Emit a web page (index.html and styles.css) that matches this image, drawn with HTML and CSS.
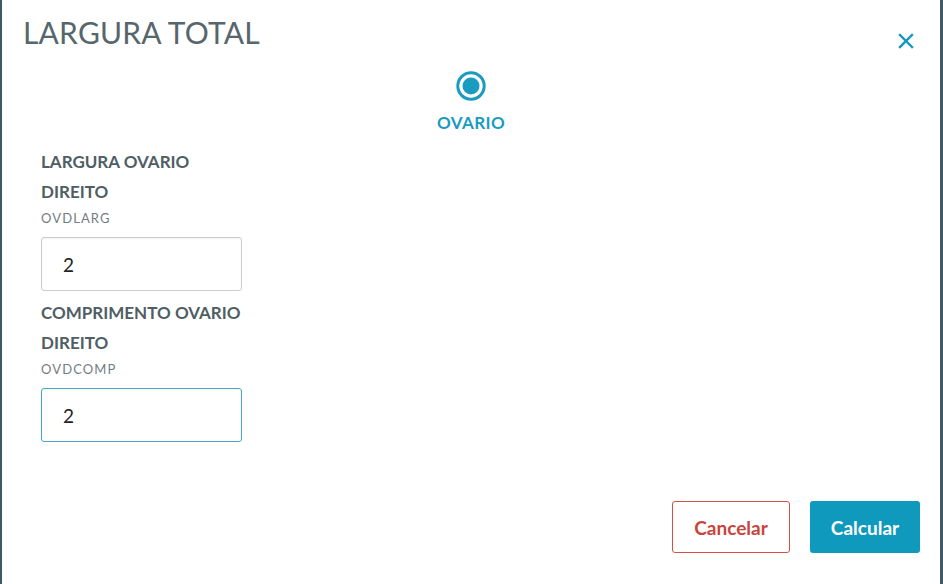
FILE: index.html
```html
<!DOCTYPE html>
<html>
<head>
<meta charset="utf-8">
<link rel="stylesheet" href="styles.css">
</head>
<body>
<div class="frame">
  <div class="modal">
    <div class="header">
      <h1 class="title">LARGURA TOTAL</h1>
      <button class="close" aria-label="Fechar">
        <svg width="16" height="16" viewBox="0 0 16 16"><path d="M2 2 L14 14 M14 2 L2 14" stroke="#1298bd" stroke-width="2.4" stroke-linecap="square" fill="none"/></svg>
      </button>
    </div>
    <div class="step">
      <svg class="radio" width="32" height="32" viewBox="0 0 32 32"><circle cx="16" cy="16" r="13.2" fill="none" stroke="#1a9bc0" stroke-width="3"/><circle cx="16" cy="16" r="8.5" fill="#1a9bc0"/></svg>
      <div class="step-label">OVARIO</div>
    </div>
    <div class="form">
      <div class="field">
        <div class="label">LARGURA OVARIO<br>DIREITO</div>
        <div class="code">OVDLARG</div>
        <div class="input">2</div>
      </div>
      <div class="field">
        <div class="label">COMPRIMENTO OVARIO<br>DIREITO</div>
        <div class="code">OVDCOMP</div>
        <div class="input focused">2</div>
      </div>
    </div>
    <div class="footer">
      <button class="btn cancel">Cancelar</button>
      <button class="btn primary">Calcular</button>
    </div>
  </div>
</div>
</body>
</html>
```
FILE: styles.css
```css
html, body {
  margin: 0;
  padding: 0;
  width: 943px;
  height: 584px;
  overflow: hidden;
  background: #3f5a66;
  font-family: Lato, "Open Sans", sans-serif;
}
.frame {
  display: flex;
  height: 584px;
  padding: 0 3px 0 2px;
  box-sizing: border-box;
}
.modal {
  flex: 1;
  background: #fff;
  display: flex;
  flex-direction: column;
  position: relative;
}
.header {
  display: flex;
  justify-content: space-between;
  align-items: flex-start;
  padding: 14px 0 0 21px;
}
.title {
  margin: 0;
  font-weight: 400;
  font-size: 30px;
  line-height: 36px;
  color: #56666d;
  letter-spacing: 0.2px;
}
.close {
  border: 0;
  background: none;
  padding: 0;
  margin: 19px 26px 0 0;
  width: 16px;
  height: 16px;
  display: flex;
}
.step {
  display: flex;
  flex-direction: column;
  align-items: center;
  margin-top: 20px;
}
.radio { display: block; }
.step-label {
  margin-top: 11px;
  font-weight: 700;
  font-size: 17px;
  line-height: 20px;
  color: #1a9bc0;
  letter-spacing: 0.4px;
}
.form {
  display: flex;
  flex-direction: column;
  gap: 7px;
  padding: 14px 0 0 39px;
}
.field { width: 201px; }
.label {
  font-weight: 700;
  font-size: 17px;
  line-height: 30px;
  color: #4f5e64;
  white-space: nowrap;
}
.code {
  font-size: 13px;
  line-height: 14px;
  color: #737d82;
  margin-top: 4px;
  letter-spacing: 1.1px;
}
.input {
  margin-top: 12px;
  height: 54px;
  box-sizing: border-box;
  border: 1px solid #c9cccd;
  border-radius: 3px;
  padding: 0 21px;
  display: flex;
  align-items: center;
  font-size: 19px;
  color: #222;
  box-shadow: inset 0 1px 2px rgba(0,0,0,0.05);
}
.input.focused {
  border: 1.5px solid #45a9c6;
}
.footer {
  margin-top: auto;
  display: flex;
  justify-content: flex-end;
  gap: 20px;
  padding: 0 20px 31px 0;
}
.btn {
  height: 52px;
  border-radius: 3px;
  font-family: Lato, "Open Sans", sans-serif;
  font-weight: 700;
  font-size: 19px;
  letter-spacing: 0;
  padding: 0;
}
.cancel {
  width: 118px;
  background: #fff;
  border: 1px solid #d2514a;
  color: #c8443d;
}
.primary {
  width: 110px;
  background: #0f99bd;
  border: 0;
  color: #fff;
}
```
